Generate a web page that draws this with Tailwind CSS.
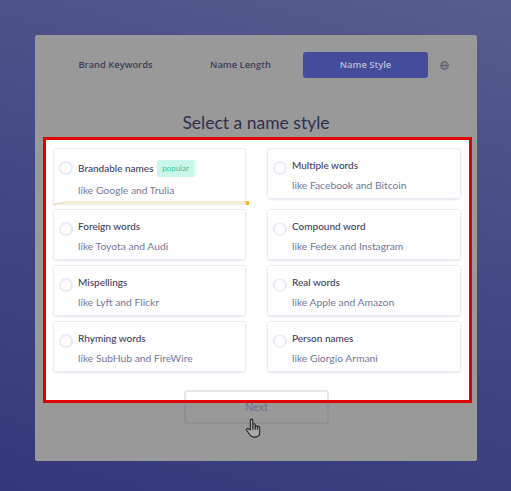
<!DOCTYPE html>
<html lang="en">
  <head>
    <meta charset="UTF-8" />
    <meta name="viewport" content="width=device-width, initial-scale=1.0" />
    <title>Select a name style</title>
    <script src="https://cdn.jsdelivr.net/npm/@tailwindcss/browser@4"></script>
  </head>
  <body class="h-[491px] w-[511px] overflow-hidden bg-[linear-gradient(195deg,#575d8e,#444a85_45%,#343879)] pt-[35px] pl-[35px] font-['Lato',sans-serif]">
    <div class="relative h-[426px] w-[442px] rounded-[2px] bg-[#999999] pt-[17px]">
      <!-- steps -->
      <div class="flex h-[26px] items-center pl-[18px] font-['Open_Sans',sans-serif] text-[9.4px] font-semibold text-[#3d3f5c]">
        <div class="w-[125px] text-center">Brand Keywords</div>
        <div class="w-[125px] text-center">Name Length</div>
        <div class="flex h-[26px] w-[125px] items-center justify-center rounded-[3px] bg-[#444c9c] text-[#b9bcd6]">Name Style</div>
        <svg class="ml-[12px] h-[9px] w-[9px] text-[#55566a]" viewBox="0 0 10 10" fill="none" stroke="currentColor" stroke-width="0.9">
          <circle cx="5" cy="5" r="4.4" />
          <ellipse cx="5" cy="5" rx="2" ry="4.4" />
          <path d="M0.6 5h8.800" />
        </svg>
      </div>

      <h1 class="mt-[31px] h-[28px] text-center text-[17.5px] leading-[28px] font-normal text-[#2f3050]">Select a name style</h1>

      <!-- highlighted options -->
      <div class="ml-[8px] h-[266px] w-[429px] border-[3px] border-[#e00000] bg-white pt-[8px] pl-[7px]">
        <div class="grid grid-cols-[193px_194px] items-start gap-x-[21px] gap-y-[5px]">
          <div class="flex h-[56px] rounded-[3px] border border-[#ebebf3] pl-[5px] shadow-[0_1px_2px_#e8e8f0]">
            <span class="mt-[12px] h-[14px] w-[14px] shrink-0 rounded-full border-2 border-[#ebebf5]"></span>
            <div class="ml-[5px]">
              <div class="mt-[10px] flex h-[18px] items-center gap-[3px]">
                <span class="text-[10px] font-medium text-[#3f4060]">Brandable names</span>
                <span class="flex h-[17px] w-[38px] items-center justify-center rounded-[2px] bg-[#c9f5ea] text-[8px] text-[#2fc7a0]">popular</span>
              </div>
              <div class="mt-[6px] text-[10.3px] text-[#73779a]">like Google and Trulia</div>
            </div>
          </div>
          <div class="flex h-[51px] rounded-[3px] border border-[#ebebf3] pl-[5px] shadow-[0_1px_2px_#e8e8f0]">
            <span class="mt-[12px] h-[14px] w-[14px] shrink-0 rounded-full border-2 border-[#ebebf5]"></span>
            <div class="ml-[5px]">
              <div class="mt-[9px] text-[10px] leading-[14px] font-medium text-[#3f4060]">Multiple words</div>
              <div class="mt-[6px] text-[10.3px] leading-[14px] text-[#73779a]">like Facebook and Bitcoin</div>
            </div>
          </div>
          <div class="flex h-[51px] rounded-[3px] border border-[#ebebf3] pl-[5px] shadow-[0_1px_2px_#e8e8f0]">
            <span class="mt-[12px] h-[14px] w-[14px] shrink-0 rounded-full border-2 border-[#ebebf5]"></span>
            <div class="ml-[5px]">
              <div class="mt-[9px] text-[10px] leading-[14px] font-medium text-[#3f4060]">Foreign words</div>
              <div class="mt-[6px] text-[10.3px] leading-[14px] text-[#73779a]">like Toyota and Audi</div>
            </div>
          </div>
          <div class="flex h-[51px] rounded-[3px] border border-[#ebebf3] pl-[5px] shadow-[0_1px_2px_#e8e8f0]">
            <span class="mt-[12px] h-[14px] w-[14px] shrink-0 rounded-full border-2 border-[#ebebf5]"></span>
            <div class="ml-[5px]">
              <div class="mt-[9px] text-[10px] leading-[14px] font-medium text-[#3f4060]">Compound word</div>
              <div class="mt-[6px] text-[10.3px] leading-[14px] text-[#73779a]">like Fedex and Instagram</div>
            </div>
          </div>
          <div class="flex h-[51px] rounded-[3px] border border-[#ebebf3] pl-[5px] shadow-[0_1px_2px_#e8e8f0]">
            <span class="mt-[12px] h-[14px] w-[14px] shrink-0 rounded-full border-2 border-[#ebebf5]"></span>
            <div class="ml-[5px]">
              <div class="mt-[9px] text-[10px] leading-[14px] font-medium text-[#3f4060]">Mispellings</div>
              <div class="mt-[6px] text-[10.3px] leading-[14px] text-[#73779a]">like Lyft and Flickr</div>
            </div>
          </div>
          <div class="flex h-[51px] rounded-[3px] border border-[#ebebf3] pl-[5px] shadow-[0_1px_2px_#e8e8f0]">
            <span class="mt-[12px] h-[14px] w-[14px] shrink-0 rounded-full border-2 border-[#ebebf5]"></span>
            <div class="ml-[5px]">
              <div class="mt-[9px] text-[10px] leading-[14px] font-medium text-[#3f4060]">Real words</div>
              <div class="mt-[6px] text-[10.3px] leading-[14px] text-[#73779a]">like Apple and Amazon</div>
            </div>
          </div>
          <div class="flex h-[51px] rounded-[3px] border border-[#ebebf3] pl-[5px] shadow-[0_1px_2px_#e8e8f0]">
            <span class="mt-[12px] h-[14px] w-[14px] shrink-0 rounded-full border-2 border-[#ebebf5]"></span>
            <div class="ml-[5px]">
              <div class="mt-[9px] text-[10px] leading-[14px] font-medium text-[#3f4060]">Rhyming words</div>
              <div class="mt-[6px] text-[10.3px] leading-[14px] text-[#73779a]">like SubHub and FireWire</div>
            </div>
          </div>
          <div class="flex h-[51px] rounded-[3px] border border-[#ebebf3] pl-[5px] shadow-[0_1px_2px_#e8e8f0]">
            <span class="mt-[12px] h-[14px] w-[14px] shrink-0 rounded-full border-2 border-[#ebebf5]"></span>
            <div class="ml-[5px]">
              <div class="mt-[9px] text-[10px] leading-[14px] font-medium text-[#3f4060]">Person names</div>
              <div class="mt-[6px] text-[10.3px] leading-[14px] text-[#73779a]">like Giorgio Armani</div>
            </div>
          </div>
        </div>
      </div>

      <button class="relative mt-[-13px] ml-[149px] block h-[34px] w-[145px] rounded-[3px] border-2 border-[#606070]/15 pt-[1px] text-[10.5px] text-[#6a6e8c]">Next</button>

      <!-- marker stroke over the first card -->
      <svg class="absolute top-[164px] left-[17px]" width="198" height="8" viewBox="0 0 198 8" fill="none">
        <path d="M1 6 L13 3 H195" stroke="#ecd9a0" stroke-width="1" />
        <path d="M13 5 H195" stroke="#f6ecd2" stroke-width="1" />
        <rect x="194" y="2" width="3" height="4" fill="#eeb52c" />
      </svg>

      <!-- hand cursor -->
      <svg class="absolute top-[383px] left-[210px]" width="17" height="20" viewBox="0 0 18 22" fill="#a8a8a8" stroke="#222" stroke-width="1.2" stroke-linejoin="round" stroke-linecap="round">
        <path d="M5.500 13V2.600a1.400 1.400 0 0 1 2.800 0V9l0-1.300a1.300 1.300 0 0 1 2.600 0V9.500a1.300 1.300 0 0 1 2.500 0v.8a1.200 1.200 0 0 1 2.400 0V16c0 3-2 5-5 5H9.500c-2.500 0-3.700-1-4.800-2.800L1.300 13.500c-.8-1.400 1.200-2.600 2.200-1.400z" />
        <path d="M8.300 9v3.500M10.900 9.500v3M13.400 10v2.500" fill="none" />
      </svg>
    </div>
  </body>
</html>
